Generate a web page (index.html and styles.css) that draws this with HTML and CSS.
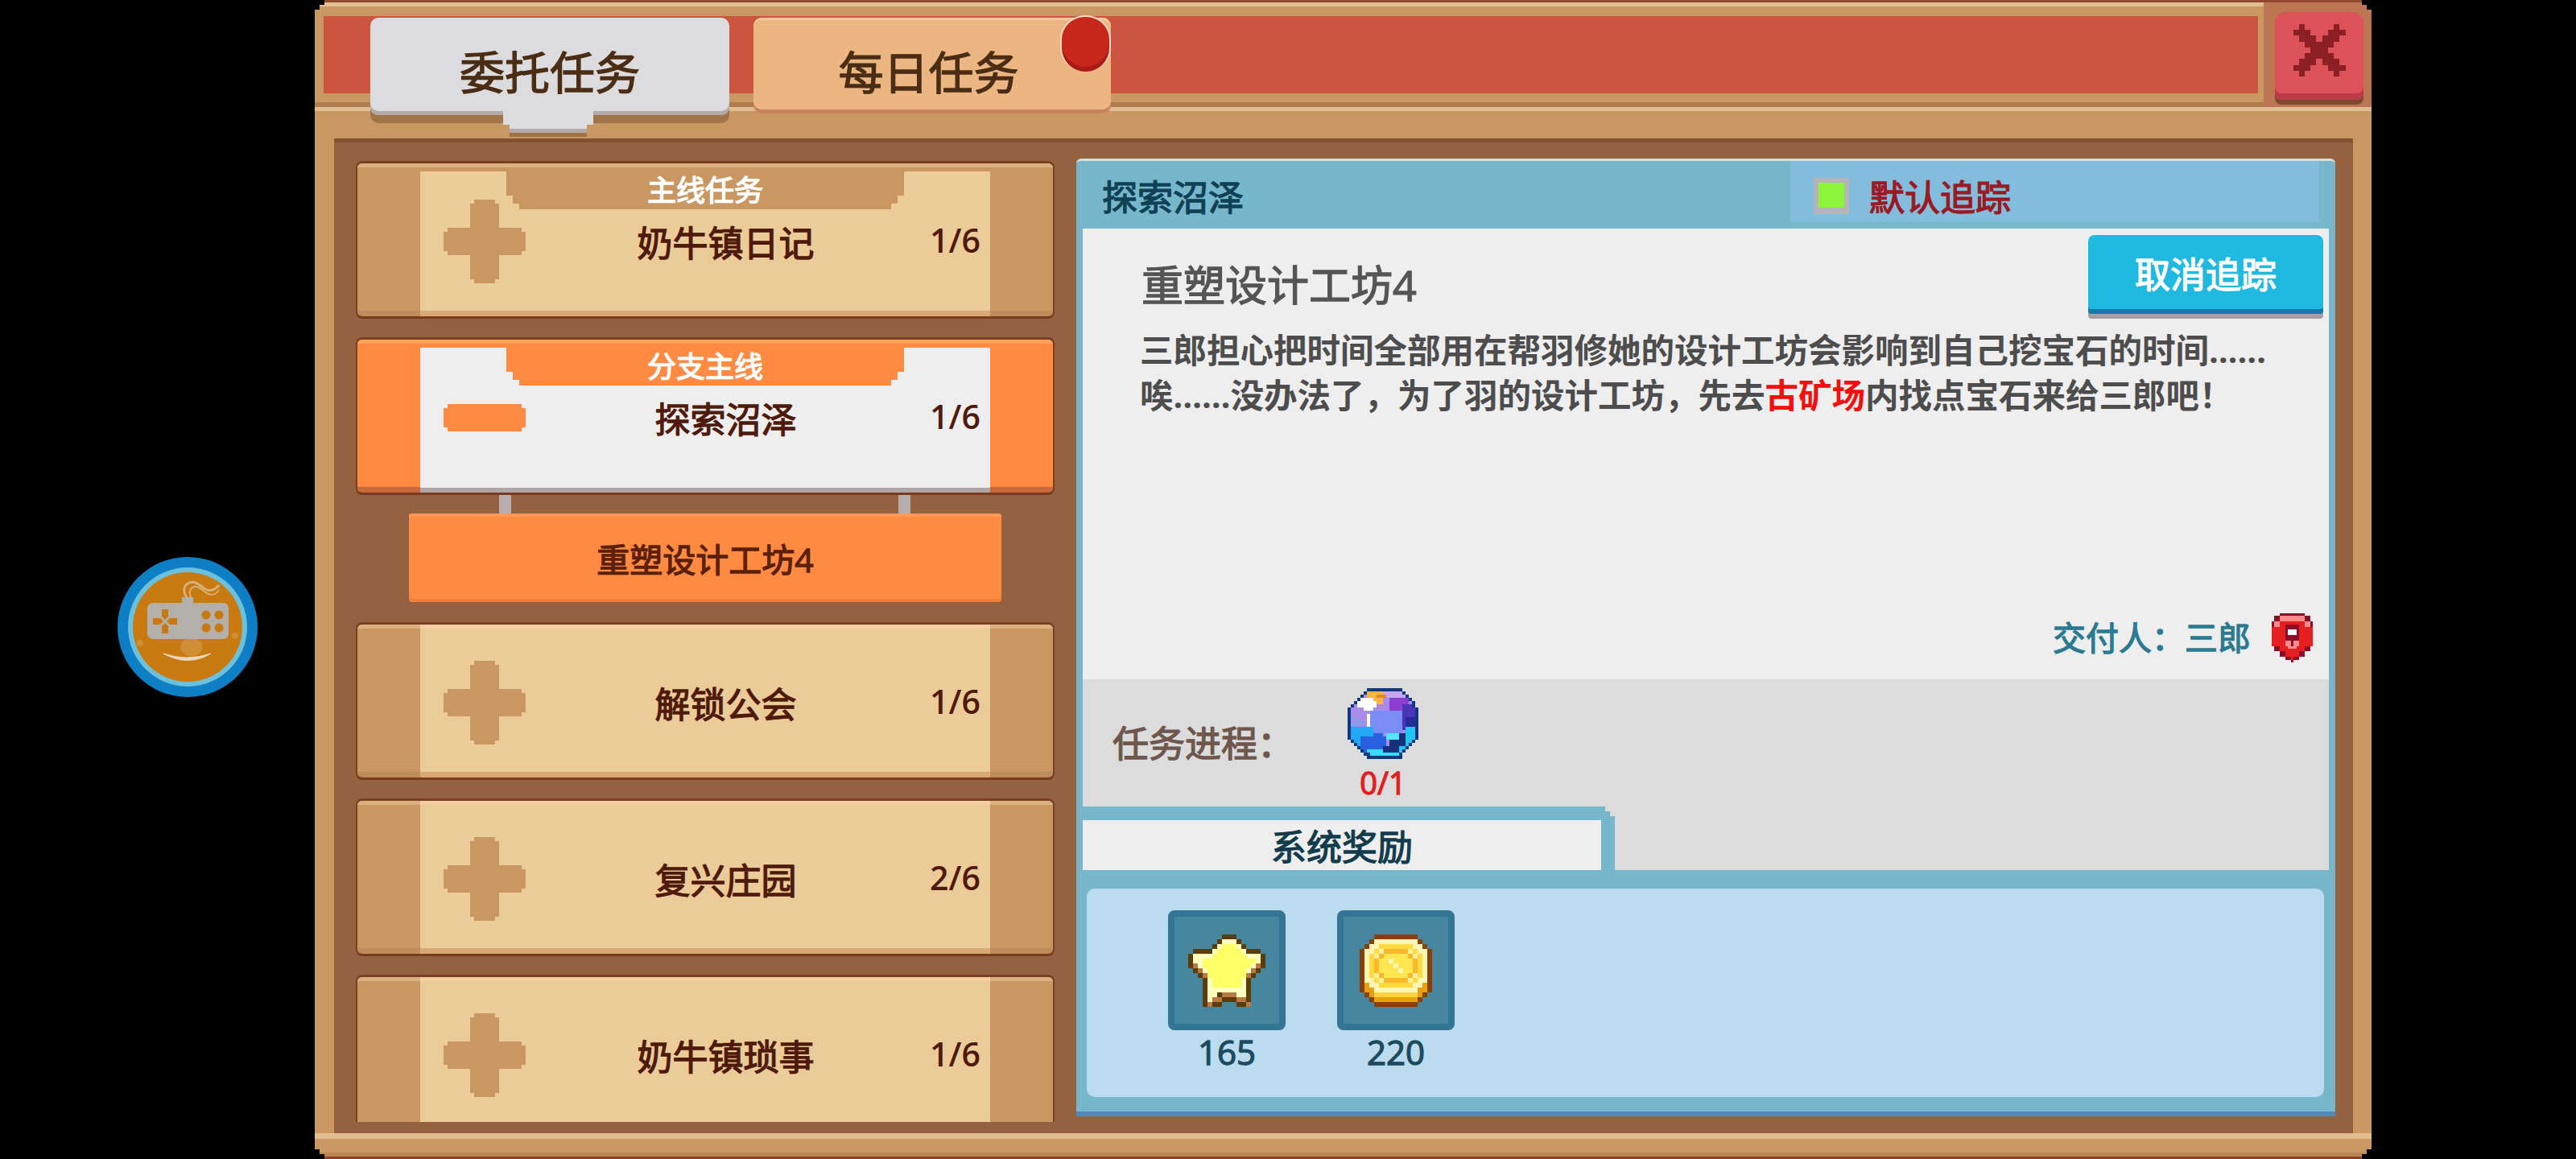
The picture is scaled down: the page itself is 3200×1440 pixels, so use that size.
FILE: index.html
```html
<!DOCTYPE html>
<html lang="zh-CN">
<head>
    <meta charset="UTF-8">
    <title>委托任务</title>
    <link rel="stylesheet" href="styles.css">
</head>
<body>
    <!-- floating game button, sits on the black letterbox -->
    <div class="float-btn">
        <svg width="174" height="174" viewBox="0 0 174 174">
            <circle cx="87" cy="87" r="87" fill="#0e7fc4"/>
            <circle cx="87" cy="87" r="74" fill="#6cc0dc"/>
            <circle cx="87" cy="87" r="68" fill="#c87a10"/>
            <ellipse cx="92" cy="112" rx="14" ry="11" fill="#d08f35"/>
            <circle cx="28" cy="107" r="4" fill="#d08f35"/>
            <circle cx="146" cy="98" r="4" fill="#d08f35"/>
            <path d="M87 52c-6-8-6-16 2-20 8-3 14 4 20 8 6 3 12 1 17-5" fill="none" stroke="#d8b078" stroke-width="3"/>
            <path d="M92 52c-4-7-3-12 3-15 6-2 11 6 18 9 5 2 10 0 13-5" fill="none" stroke="#d8b078" stroke-width="2"/>
            <rect x="80" y="50" width="14" height="9" fill="#b3b0ac"/>
            <rect x="37" y="57" width="101" height="45" rx="7" fill="#b3b0ac"/>
            <path d="M55 65h8v9l-4 4-4-4zM55 95h8v-9l-4-4-4 4zM44 76h9l4 4-4 4h-9zM74 76h-9l-4 4 4 4h9z" fill="#c87a10"/>
            <circle cx="110" cy="72" r="5.5" fill="#c87a10"/>
            <circle cx="126" cy="72" r="5.5" fill="#c87a10"/>
            <circle cx="110" cy="88" r="5.5" fill="#c87a10"/>
            <circle cx="126" cy="88" r="5.5" fill="#c87a10"/>
            <path d="M57 120q30 17 59 0q-30 10-59 0z" fill="#e8d8c0" stroke="#e8d8c0" stroke-width="1"/>
        </svg>
    </div>

    <div class="window">
        <div class="topbar">
            <div class="redbar">
                <div class="tab tab-active">委托任务</div>
                <div class="tab tab-daily">每日任务<span class="badge"></span></div>
            </div>
            <div class="close-area">
                <div class="close-btn">
                    <svg width="72" height="65" viewBox="0 0 9 9" shape-rendering="crispEdges">
                        <path fill="#8c1f24" d="M1 0h1v1H1zM7 0h1v1H7zM0 1h3v1H0zM6 1h3v1H6zM1 2h3v1H1zM5 2h3v1H5zM2 3h5v1H2zM3 4h3v1H3zM2 5h5v1H2zM1 6h3v1H1zM5 6h3v1H5zM0 7h3v1H0zM6 7h3v1H6zM1 8h1v1H1zM7 8h1v1H7z"/>
                    </svg>
                </div>
            </div>
        </div>

        <div class="window-body">
            <div class="panel">
                <div class="quest-list">
                    <div class="row">
                        <div class="row-body has-label">
                            <div class="row-label">主线任务</div>
                            <div class="row-content">
                                <svg class="row-icon" width="102" height="104" viewBox="0 0 102 104"><path d="M38 0h26v5h5v30h28v5h5v24h-5v5H69v30h-5v5H38v-5h-5V69H5v-5H0V40h5v-5h28V5h5z"/></svg>
                                <span class="row-title">奶牛镇日记</span>
                                <span class="row-count">1/6</span>
                            </div>
                        </div>
                    </div>

                    <div class="row-group">
                        <div class="row row-open">
                            <div class="row-body has-label">
                                <div class="row-label">分支主线</div>
                                <div class="row-content">
                                    <svg class="row-icon" width="102" height="104" viewBox="0 0 102 104"><path d="M5 35h92v5h5v24h-5v5H5v-5H0V40h5z"/></svg>
                                    <span class="row-title">探索沼泽</span>
                                    <span class="row-count">1/6</span>
                                </div>
                            </div>
                        </div>
                        <div class="connector"><i></i><i></i></div>
                        <div class="subtask">重塑设计工坊4</div>
                    </div>

                    <div class="row">
                        <div class="row-body">
                            <div class="row-content">
                                <svg class="row-icon" width="102" height="104" viewBox="0 0 102 104"><path d="M38 0h26v5h5v30h28v5h5v24h-5v5H69v30h-5v5H38v-5h-5V69H5v-5H0V40h5v-5h28V5h5z"/></svg>
                                <span class="row-title">解锁公会</span>
                                <span class="row-count">1/6</span>
                            </div>
                        </div>
                    </div>

                    <div class="row">
                        <div class="row-body">
                            <div class="row-content">
                                <svg class="row-icon" width="102" height="104" viewBox="0 0 102 104"><path d="M38 0h26v5h5v30h28v5h5v24h-5v5H69v30h-5v5H38v-5h-5V69H5v-5H0V40h5v-5h28V5h5z"/></svg>
                                <span class="row-title">复兴庄园</span>
                                <span class="row-count">2/6</span>
                            </div>
                        </div>
                    </div>

                    <div class="row">
                        <div class="row-body">
                            <div class="row-content">
                                <svg class="row-icon" width="102" height="104" viewBox="0 0 102 104"><path d="M38 0h26v5h5v30h28v5h5v24h-5v5H69v30h-5v5H38v-5h-5V69H5v-5H0V40h5v-5h28V5h5z"/></svg>
                                <span class="row-title">奶牛镇琐事</span>
                                <span class="row-count">1/6</span>
                            </div>
                        </div>
                    </div>
                </div>

                <div class="detail">
                    <div class="detail-head">
                        <span class="detail-name">探索沼泽</span>
                        <div class="track-toggle">
                            <span class="check"></span>
                            <span class="track-text">默认追踪</span>
                        </div>
                    </div>

                    <div class="detail-main">
                        <div class="quest-head">
                            <h2 class="quest-title">重塑设计工坊4</h2>
                            <div class="cancel-btn">取消追踪</div>
                        </div>
                        <p class="quest-desc">三郎担心把时间全部用在帮羽修她的设计工坊会影响到自己挖宝石的时间……<br>唉……没办法了，为了羽的设计工坊，先去<span class="hl">古矿场</span>内找点宝石来给三郎吧！</p>
                        <div class="deliver">
                            <span>交付人：三郎</span>
                            <svg width="51" height="61" viewBox="0 0 15 18" shape-rendering="crispEdges">
                                <path fill="#e62020" d="M1 3h13v10H1zM0 5h15v7H0zM3 13h9v1H3zM5 14h5v2H5zM7 16h1v1H7z"/>
                                <path fill="#8c0f2a" d="M3 0h9v1H3zM1 1h2v2H1zM12 1h2v2h-2zM0 3h1v2H0zM14 3h1v2h-1zM5 4h5v6H5zM7 10h1v2H7zM1 12h2v2H1zM12 12h2v2h-2zM3 14h2v2H3zM10 14h2v2h-2zM5 16h2v1H5zM8 16h2v1H8zM7 17h1v1H7z"/>
                                <path fill="#ff8a8a" d="M3 1h9v2H3zM1 3h2v2H1zM12 3h2v2h-2zM5 10h2v2H5zM8 10h2v2H8zM6 12h3v1H6z"/>
                                <path fill="#fff" d="M6 6h3v2H6z"/>
                            </svg>
                        </div>
                    </div>

                    <div class="progress">
                        <span class="progress-label">任务进程：</span>
                        <div class="progress-item">
                            <svg width="88" height="88" viewBox="0 0 22 22" shape-rendering="crispEdges">
                                <clipPath id="gem-clip"><path d="M6 0h11v1h1v1h1v1h1v1h1v2h1v10h-1v1h-1v1h-1v1h-1v1h-1v1H6v-1H5v-1H4v-1H3v-1H2v-1H1v-1H0V6h1V5h1V4h1V3h1V2h1V1h1z"/></clipPath>
                                <g clip-path="url(#gem-clip)">
                                    <path fill="#a98bea" d="M0 0h22v22H0z"/>
                                    <path fill="#c7a6f0" d="M10 1h8v2h-8z"/>
                                    <path fill="#8a3fd0" d="M13 3h6v5h-6z"/>
                                    <path fill="#4a35b8" d="M17 5h5v8h-5z"/>
                                    <path fill="#2a2a9a" d="M18 9h4v4h-4z"/>
                                    <path fill="#7a8cf5" d="M7 7h10v7H7z"/>
                                    <path fill="#ffb347" d="M6 1h5v4H6z"/>
                                    <path fill="#e08a20" d="M9 2h3v1H9z"/>
                                    <path fill="#fff" d="M4 3h4v1H4zM3 4h6v2H3zM5 6h3v1H5zM6 8h1v5H6z"/>
                                    <path fill="#7fa0ee" d="M1 9h2v1H1zM3 10h2v1H3zM1 11h2v1H1z"/>
                                    <path fill="#22a8f5" d="M0 12h8v10H0z"/>
                                    <path fill="#2a5fe0" d="M4 15h8v7H4zM8 14h3v2H8z"/>
                                    <path fill="#55e5ff" d="M12 14h4v2h-4z"/>
                                    <path fill="#16307a" d="M16 14h2v2h-2zM13 16h5v2h-5zM11 18h5v2h-5z"/>
                                    <path fill="#22c5f5" d="M18 12h4v10h-4zM16 18h2v3h-2z"/>
                                    <path fill="#35dcff" d="M6 19h5v3H6zM11 20h6v2h-6z"/>
                                </g>
                                <path fill="#12367f" d="M6 0h11v1H6zM5 1h1v1H5zM17 1h1v1h-1zM4 2h1v1H4zM18 2h1v1h-1zM3 3h1v1H3zM19 3h1v1h-1zM2 4h1v1H2zM20 4h1v1h-1zM1 5h1v1H1zM21 6h1v10h-1zM20 5h1v1h-1zM0 6h1v10H0zM1 16h1v1H1zM20 16h1v1h-1zM2 17h1v1H2zM19 17h1v1h-1zM3 18h1v1H3zM18 18h1v1h-1zM4 19h1v1H4zM17 19h1v1h-1zM5 20h2v1H5zM16 20h1v1h-1zM6 21h11v1H6z"/>
                            </svg>
                            <span class="progress-count">0/1</span>
                        </div>
                    </div>

                    <div class="reward-tabs">
                        <div class="reward-tab"><div class="reward-tab-inner">系统奖励</div></div>
                    </div>

                    <div class="rewards">
                        <div class="reward">
                            <div class="slot">
                                <svg width="96" height="90" viewBox="0 0 16 15" shape-rendering="crispEdges">
                                    <path fill="#5a3d0a" d="M7 0h3v1H7zM6 1h5v1H6zM5 2h7v1H5zM1 3h14v1H1zM0 4h16v3H0zM1 7h14v1H1zM2 8h12v1H2zM3 9h10v6H3z"/>
                                    <path fill="#ffffc0" d="M7 1h3v1H7zM6 2h5v1H6zM5 3h7v1H5zM1 4h14v2H1zM2 6h12v1H2zM3 7h10v1H3zM4 8h8v4H4zM4 12h2v1H4zM10 12h2v1h-2zM4 13h1v1H4z"/>
                                    <path fill="#ffff66" d="M7 2h3v1H7zM6 3h5v1H6zM5 4h7v1H5zM3 5h11v1H3zM3 6h10v1H3zM4 7h8v2H4zM5 9h6v2H5z"/>
                                    <path fill="#b87a45" d="M1 6h1v1H1zM14 6h1v1h-1zM2 7h1v1H2zM13 7h1v1h-1zM3 8h1v1H3zM12 8h1v1h-1zM7 12h3v1H7zM5 13h2v1H5zM10 13h2v1h-2zM4 14h1v1H4zM12 14h1v1h-1z"/>
                                    <path fill="#5a3d0a" d="M7 13h3v1H7zM5 14h2v1H5zM10 14h2v1h-2z"/>
                                    <path fill="#46869e" d="M7 14h3v1H7z"/>
                                </svg>
                            </div>
                            <span class="reward-num">165</span>
                        </div>
                        <div class="reward">
                            <div class="slot">
                                <svg width="90" height="90" viewBox="0 0 15 15" shape-rendering="crispEdges">
                                    <path fill="#8a3f08" d="M3 0h9v1H3zM2 1h11v1H2zM1 2h13v1H1zM0 3h15v9H0zM1 12h13v1H1zM2 13h11v1H2zM3 14h9v1H3z"/>
                                    <path fill="#e8a010" d="M1 10h13v2H1zM2 12h11v1H2zM3 13h9v1H3z"/>
                                    <path fill="#ffd43b" d="M3 12h9v1H3z"/>
                                    <path fill="#fff6b5" d="M3 1h9v1H3zM2 2h11v1H2zM1 3h13v7H1zM2 10h11v1H2zM3 11h9v1H3z"/>
                                    <path fill="#ffd93d" d="M4 2h7v1H4zM3 3h9v1H3zM2 4h11v5H2zM3 9h9v1H3zM4 10h7v1H4z"/>
                                    <path fill="#fff0a0" d="M4 3h7v1H4zM3 4h9v5H3zM4 9h7v1H4z"/>
                                    <path fill="#f9b82b" d="M5 3h5v1H5zM5 9h5v1H5zM3 5h1v3H3zM11 5h1v3h-1zM4 4h1v1H4zM10 4h1v1h-1zM4 8h1v1H4zM10 8h1v1h-1z"/>
                                    <path fill="#ffe650" d="M5 4h5v5H5zM4 5h7v3H4z"/>
                                    <path fill="#fff6b5" d="M6 5h1v1H6zM7 6h1v1H7zM8 7h1v1H8z"/>
                                </svg>
                            </div>
                            <span class="reward-num">220</span>
                        </div>
                    </div>
                </div>
            </div>
        </div>

        <div class="window-foot"></div>
    </div>
</body>
</html>
```

FILE: styles.css
```css
* {
    box-sizing: border-box;
}

body {
    margin: 0;
    width: 3200px;
    height: 1440px;
    overflow: hidden;
    background: #000;
    position: relative;
    font-family: "Open Sans", "Noto Sans CJK SC", sans-serif;
    -webkit-text-stroke: 1.3px;
}

.float-btn {
    position: absolute;
    left: 146px;
    top: 692px;
    width: 174px;
    height: 174px;
}

/* ---- window frame ---- */
.window {
    --c: 6px;
    width: 2555px;
    height: 1440px;
    margin-left: 391px;
    display: flex;
    flex-direction: column;
    background: #c99762;
    border-top: 3px solid #8f4a30;
    clip-path: polygon(0 calc(var(--c) * 2), var(--c) calc(var(--c) * 2), var(--c) var(--c), calc(var(--c) * 2) var(--c), calc(var(--c) * 2) 0, calc(100% - var(--c) * 2) 0, calc(100% - var(--c) * 2) var(--c), calc(100% - var(--c)) var(--c), calc(100% - var(--c)) calc(var(--c) * 2), 100% calc(var(--c) * 2), 100% calc(100% - var(--c) * 2), calc(100% - var(--c)) calc(100% - var(--c) * 2), calc(100% - var(--c)) calc(100% - var(--c)), calc(100% - var(--c) * 2) calc(100% - var(--c)), calc(100% - var(--c) * 2) 100%, calc(var(--c) * 2) 100%, calc(var(--c) * 2) calc(100% - var(--c)), var(--c) calc(100% - var(--c)), var(--c) calc(100% - var(--c) * 2), 0 calc(100% - var(--c) * 2));
}

.topbar {
    height: 130px;
    flex: none;
    display: flex;
    padding: 17px 0 0 11px;
    background: #c99762;
    box-shadow: inset 0 5px #e2bf92, inset 0 -6px #b07d50;
}

.redbar {
    width: 2403px;
    height: 96px;
    display: flex;
    align-items: flex-start;
    background: #cc5542;
}

.tab {
    position: relative;
    height: 121px;
    margin-top: 2px;
    display: flex;
    align-items: center;
    justify-content: center;
    padding-top: 12px;
    font-size: 56px;
    line-height: 1;
    color: #4a2d14;
    border-radius: 10px;
}

.tab-active {
    width: 446px;
    margin-left: 58px;
    background: #dcdcde;
    box-shadow: inset 0 -5px #b3a9a9, 0 10px #a07448;
}

.tab-active::after {
    content: "";
    position: absolute;
    left: 165px;
    top: 116px;
    width: 112px;
    height: 32px;
    background: linear-gradient(#dcdcde 22px, #b3a9a9 22px 27px, #9e7148 27px);
    clip-path: polygon(0 0, 100% 0, 100% 17px, calc(100% - 8px) 17px, calc(100% - 8px) 100%, 8px 100%, 8px 17px, 0 17px);
}

.tab-daily {
    width: 444px;
    height: 119px;
    margin-left: 30px;
    padding: 14px 9px 0 0;
    background: #ecb683;
    box-shadow: inset 0 3px #f4c79c, inset 0 -5px #c7835c;
}

.badge {
    position: absolute;
    right: 0;
    top: -3px;
    width: 63px;
    height: 70px;
    background: #c8281c;
    border: 2px solid #f3d9c4;
    border-bottom: 0;
    border-radius: 50% / 42%;
    box-shadow: inset 0 -6px #a81b14;
}

.close-area {
    flex: 1;
    margin: -17px 0 0 7px;
    padding: 12px 10px 0 14px;
    background: #bc7653;
}

.close-btn {
    height: 109px;
    display: flex;
    align-items: flex-start;
    justify-content: center;
    padding-top: 15px;
    background: #dd5158;
    border-radius: 14px 14px 8px 8px;
    box-shadow: inset 0 -8px #bb3b48, 0 6px #7d4a2c;
}

.window-body {
    flex: 1;
    padding: 34px 23px 0 24px;
    border-top: 5px solid #e2bf92;
}

.window-foot {
    height: 32px;
    flex: none;
    border-top: 7px solid #e2bf92;
    box-shadow: inset 0 -3px #8f3f28;
    background: linear-gradient(#c99762 17px, #b98552 17px);
}

/* ---- inner brown panel ---- */
.panel {
    height: 1236px;
    display: grid;
    grid-template-columns: 868px 1fr;
    column-gap: 27px;
    padding: 23px 22px 14px 27px;
    background: #946240;
    border-top: 5px solid #85522f;
}

/* ---- quest list ---- */
.quest-list {
    display: flex;
    flex-direction: column;
    gap: 23px;
    overflow: hidden;
    min-height: 0;
}

.row {
    flex: none;
    height: 196px;
    display: flex;
    flex-direction: column;
    padding: 0 78px;
    border-top: 3px solid #7a4023;
    border-bottom: 3px solid #7a3a20;
    border-left: 2px solid #7a4023;
    border-right: 2px solid #7a4023;
    border-radius: 8px;
    background: linear-gradient(#dcb07f 5px, #c99762 5px, #c99762 calc(100% - 7px), #bd8c5a calc(100% - 7px));
}

.row-body {
    flex: 1;
    background: #ebcb98;
    box-shadow: inset 0 5px #f5cfa0, inset 0 -7px #d9a873;
}

.row-body.has-label {
    margin-top: 10px;
    box-shadow: inset 0 -7px #d9a873;
}

.row-label {
    height: 47px;
    margin: 0 107px;
    font-size: 36px;
    line-height: 47px;
    text-align: center;
    color: #fff;
    background: #c99762;
    clip-path: polygon(0 0, 100% 0, 100% 30px, calc(100% - 8px) 30px, calc(100% - 8px) 40px, calc(100% - 16px) 40px, calc(100% - 16px) 100%, 16px 100%, 16px 40px, 8px 40px, 8px 30px, 0 30px);
}

.row-content {
    height: 104px;
    margin-top: 45px;
    display: grid;
    grid-template-columns: 102px 1fr 68px;
    align-items: center;
    padding: 0 12px 0 29px;
}

.has-label .row-content {
    margin-top: -12px;
}

.row-icon {
    fill: #c99762;
}

.row-title {
    padding-top: 3px;
    font-size: 44px;
    line-height: 1;
    text-align: center;
    color: #4f1a0c;
}

.row-count {
    padding-bottom: 3px;
    font-size: 41px;
    font-weight: 600;
    line-height: 1;
    text-align: right;
    color: #4f1a0c;
    -webkit-text-stroke: 0;
}

.row-open {
    background: linear-gradient(#ffa257 5px, #ff8a42 5px, #ff8a42 calc(100% - 7px), #c9683a calc(100% - 7px));
}

.row-open .row-body {
    background: #eeeeee;
    box-shadow: inset 0 -6px #b0a5a5;
}

.row-open .row-label {
    background: #ff8a42;
}

.row-open .row-icon {
    fill: #ff8a42;
}

.row-group {
    flex: none;
    margin-bottom: 2px;
}

.connector {
    height: 23px;
    display: flex;
    justify-content: space-between;
    padding: 0 179px 0 178px;
}

.connector i {
    width: 15px;
    background: #b7adad;
}

.subtask {
    height: 110px;
    margin: 0 66px;
    display: flex;
    align-items: center;
    justify-content: center;
    padding-top: 4px;
    font-size: 41px;
    line-height: 1;
    color: #5c2008;
    background: #ff8a42;
    border-radius: 4px;
    box-shadow: inset 0 4px #ff9a58, inset 0 -4px #f0803c;
}

/* ---- detail column ---- */
.detail {
    margin: -3px 0 7px;
    height: 1190px;
    display: flex;
    flex-direction: column;
    background: #77b7cb;
    border-top: 3px solid #cfe3dd;
    border-radius: 6px 6px 0 0;
    box-shadow: inset 0 -6px #5288bb;
}

.detail-head {
    height: 84px;
    flex: none;
    display: flex;
    padding-left: 32px;
}

.detail-name {
    padding-top: 23px;
    font-size: 44px;
    line-height: 1;
    color: #0f4155;
}

.track-toggle {
    width: 657px;
    height: 76px;
    margin-left: auto;
    margin-right: 20px;
    display: flex;
    align-items: center;
    padding: 10px 0 0 29px;
    background: #83bddd;
}

.check {
    width: 44px;
    height: 45px;
    border: 8px solid #b5b5b5;
    border-width: 6px 6px 8px 6px;
    background: #8ff53a;
}

.track-text {
    margin: 4px 0 0 25px;
    font-size: 44px;
    line-height: 1;
    color: #9a1a24;
}

.detail-main {
    height: 560px;
    flex: none;
    margin: 0 8px;
    display: flex;
    flex-direction: column;
    background: #eeeeee;
}

.quest-head {
    display: flex;
    justify-content: space-between;
    align-items: flex-start;
    padding: 8px 7px 0 73px;
}

.quest-title {
    margin: 36px 0 0;
    font-size: 52px;
    line-height: 1;
    font-weight: 400;
    color: #555;
}

.cancel-btn {
    width: 292px;
    height: 98px;
    display: flex;
    align-items: center;
    justify-content: center;
    font-size: 44px;
    line-height: 1;
    color: #fff;
    background: #20bae0;
    border-radius: 8px 8px 4px 4px;
    box-shadow: inset 0 -6px #1778ac, 0 6px #a8a0a0;
}

.quest-desc {
    margin: 17px 0 0;
    padding-left: 71px;
    font-size: 41.5px;
    line-height: 56px;
    font-weight: 700;
    color: #4d4d4d;
    white-space: nowrap;
    -webkit-text-stroke: 0;
}

.hl {
    color: #f01010;
}

.deliver {
    margin-top: auto;
    display: flex;
    align-items: center;
    justify-content: flex-end;
    gap: 26px;
    padding: 0 20px 21px 0;
    font-size: 41px;
    line-height: 1;
    color: #2a7a92;
}

.progress {
    height: 158px;
    flex: none;
    margin: 0 8px;
    display: flex;
    align-items: center;
    padding-left: 37px;
    background: #dcdcdc;
}

.progress-label {
    width: 292px;
    font-size: 45px;
    line-height: 1;
    color: #6f574e;
}

.progress-item {
    display: flex;
    flex-direction: column;
    align-items: center;
    gap: 10px;
}

.progress-item svg {
    display: block;
}

.progress-count {
    font-size: 38px;
    line-height: 1;
    color: #e02020;
}

.reward-tabs {
    height: 79px;
    flex: none;
    margin: 0 8px;
    background: #dcdcdc;
}

.reward-tab {
    width: 661px;
    height: 79px;
    padding: 17px 17px 0 0;
    background: #77b7cb;
    clip-path: polygon(0 0, calc(100% - 12px) 0, calc(100% - 12px) 6px, calc(100% - 6px) 6px, calc(100% - 6px) 12px, 100% 12px, 100% 100%, 0 100%);
}

.reward-tab-inner {
    height: 62px;
    display: flex;
    align-items: center;
    justify-content: center;
    padding-top: 4px;
    font-size: 44px;
    line-height: 1;
    color: #123c4c;
    background: #eeeeee;
}

.rewards {
    height: 259px;
    flex: none;
    margin: 23px 14px 0 13px;
    display: flex;
    gap: 64px;
    padding: 27px 0 0 101px;
    background: #bbdcee;
    border-radius: 10px;
}

.reward {
    width: 146px;
    display: flex;
    flex-direction: column;
    align-items: center;
}

.slot {
    width: 146px;
    height: 149px;
    display: flex;
    align-items: center;
    justify-content: center;
    border: 8px solid #337595;
    border-radius: 8px;
    background: #46869e;
}

.reward-num {
    margin-top: 4px;
    font-size: 42px;
    line-height: 1.1;
    color: #1c4a5f;
}
```
